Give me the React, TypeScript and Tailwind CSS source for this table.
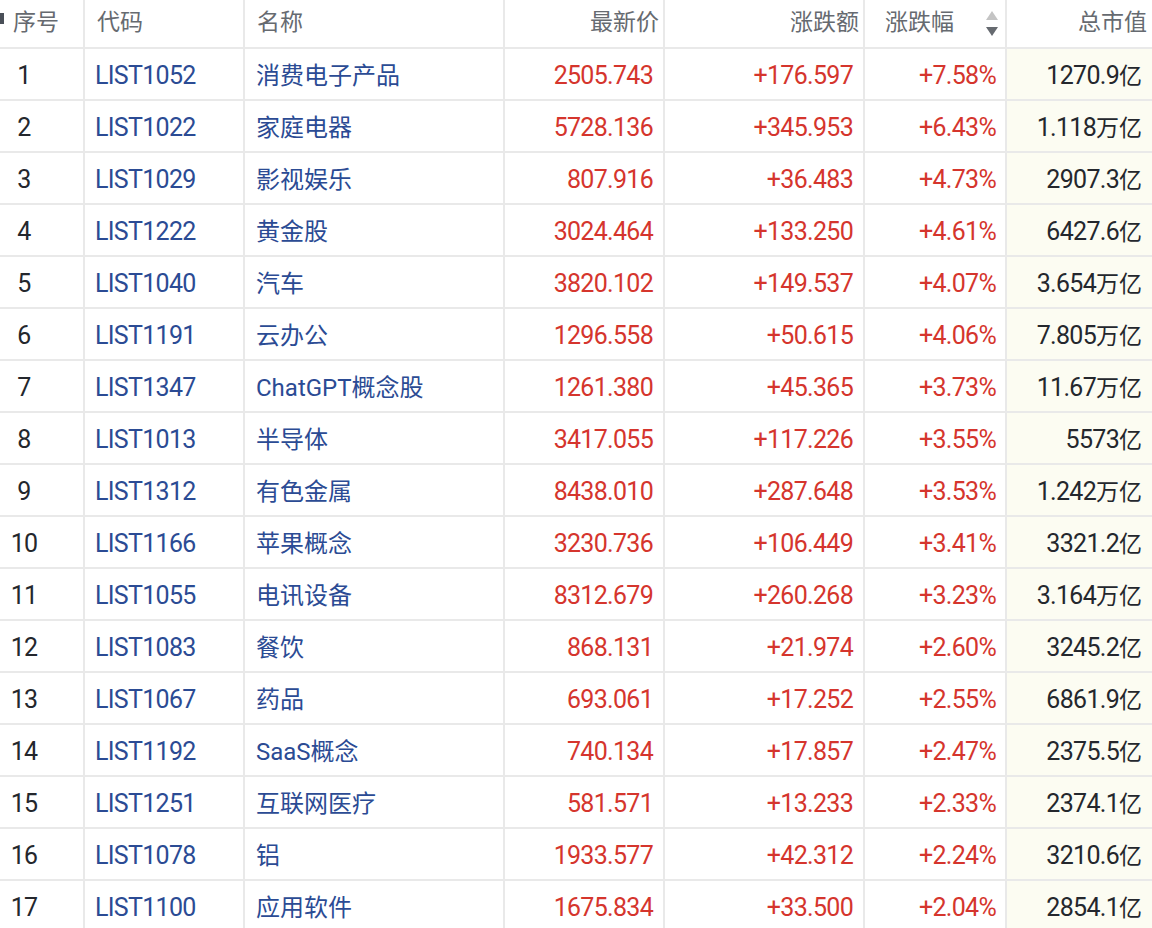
import React from 'react';

type Row = [string, string, string, string, string, string];

const rows: Row[] = [
  ['LIST1052', '消费电子产品', '2505.743', '+176.597', '+7.58%', '1270.9亿'],
  ['LIST1022', '家庭电器', '5728.136', '+345.953', '+6.43%', '1.118万亿'],
  ['LIST1029', '影视娱乐', '807.916', '+36.483', '+4.73%', '2907.3亿'],
  ['LIST1222', '黄金股', '3024.464', '+133.250', '+4.61%', '6427.6亿'],
  ['LIST1040', '汽车', '3820.102', '+149.537', '+4.07%', '3.654万亿'],
  ['LIST1191', '云办公', '1296.558', '+50.615', '+4.06%', '7.805万亿'],
  ['LIST1347', 'ChatGPT概念股', '1261.380', '+45.365', '+3.73%', '11.67万亿'],
  ['LIST1013', '半导体', '3417.055', '+117.226', '+3.55%', '5573亿'],
  ['LIST1312', '有色金属', '8438.010', '+287.648', '+3.53%', '1.242万亿'],
  ['LIST1166', '苹果概念', '3230.736', '+106.449', '+3.41%', '3321.2亿'],
  ['LIST1055', '电讯设备', '8312.679', '+260.268', '+3.23%', '3.164万亿'],
  ['LIST1083', '餐饮', '868.131', '+21.974', '+2.60%', '3245.2亿'],
  ['LIST1067', '药品', '693.061', '+17.252', '+2.55%', '6861.9亿'],
  ['LIST1192', 'SaaS概念', '740.134', '+17.857', '+2.47%', '2375.5亿'],
  ['LIST1251', '互联网医疗', '581.571', '+13.233', '+2.33%', '2374.1亿'],
  ['LIST1078', '铝', '1933.577', '+42.312', '+2.24%', '3210.6亿'],
  ['LIST1100', '应用软件', '1675.834', '+33.500', '+2.04%', '2854.1亿'],
];

const grid = 'grid grid-cols-[85px_160px_260px_160px_200px_142px_1fr]';
const cell = 'flex items-center border-r-2 border-[#e9e9e9] overflow-hidden whitespace-nowrap';
// numbers: slightly larger and tighter to mimic the condensed DIN face
const num = 'text-[25px] tracking-[-0.7px] pt-[4px]';

// split "1270.9亿" into digits + unit so the unit keeps the CJK size
function Cap({ v }: { v: string }) {
  const m = v.match(/^([\d.]+)(.*)$/);
  return (
    <span>
      {m ? m[1] : v}
      <span className="text-[23px] tracking-normal">{m ? m[2] : ''}</span>
    </span>
  );
}

function SortIcon() {
  return (
    <svg width="14" height="26" viewBox="0 0 14 26" className="shrink-0">
      <path d="M7 0 L13 9 L1 9 Z" fill="#c4c4c4" />
      <path d="M1 16 L13 16 L7 25 Z" fill="#666a70" />
    </svg>
  );
}

export default function App() {
  return (
    <div
      className="w-[1152px] h-[928px] overflow-hidden bg-white tabular-nums"
      style={{ fontFamily: 'Roboto, "Noto Sans CJK SC", sans-serif' }}
    >
      {/* header */}
      <div className={`${grid} h-[49px] border-b-2 border-[#e9e9e9] text-[23px] text-[#666a70]`}>
        <div className={`${cell} relative pl-[13px]`}>
          <span className="absolute left-0 top-[13px] w-[4px] h-[11px] bg-[#4a4f58]" />
          序号
        </div>
        <div className={`${cell} pl-[12px]`}>代码</div>
        <div className={`${cell} pl-[12px]`}>名称</div>
        <div className={`${cell} justify-end pr-[4px]`}>最新价</div>
        <div className={`${cell} justify-end pr-[4px]`}>涨跌额</div>
        <div className={`${cell} justify-between pl-[20px] pr-[6px]`}>
          <span>涨跌幅</span>
          <SortIcon />
        </div>
        <div className="flex items-center justify-end pr-[5px]">总市值</div>
      </div>

      {rows.map((r, i) => (
        <div key={r[0]} className={`${grid} h-[52px] border-b-2 border-[#e9e9e9]`}>
          <div className={`${cell} ${num} text-[#24272d]`}>
            <span className="w-[48px] text-center">{i + 1}</span>
          </div>
          <div className={`${cell} ${num} pl-[10px] text-[#2b4b94]`}>{r[0]}</div>
          <div className={`${cell} text-[24px] pt-[3px] pl-[11px] text-[#2b4b94]`}>{r[1]}</div>
          <div className={`${cell} ${num} justify-end pr-[10px] text-[#d5352d]`}>{r[2]}</div>
          <div className={`${cell} ${num} justify-end pr-[10px] text-[#d5352d]`}>{r[3]}</div>
          <div className={`${cell} ${num} justify-end pr-[9px] text-[#d5352d]`}>{r[4]}</div>
          <div className={`flex items-center justify-end ${num} pr-[10px] bg-[#fcfcf2] text-[#24272d] whitespace-nowrap`}>
            <Cap v={r[5]} />
          </div>
        </div>
      ))}
    </div>
  );
}
